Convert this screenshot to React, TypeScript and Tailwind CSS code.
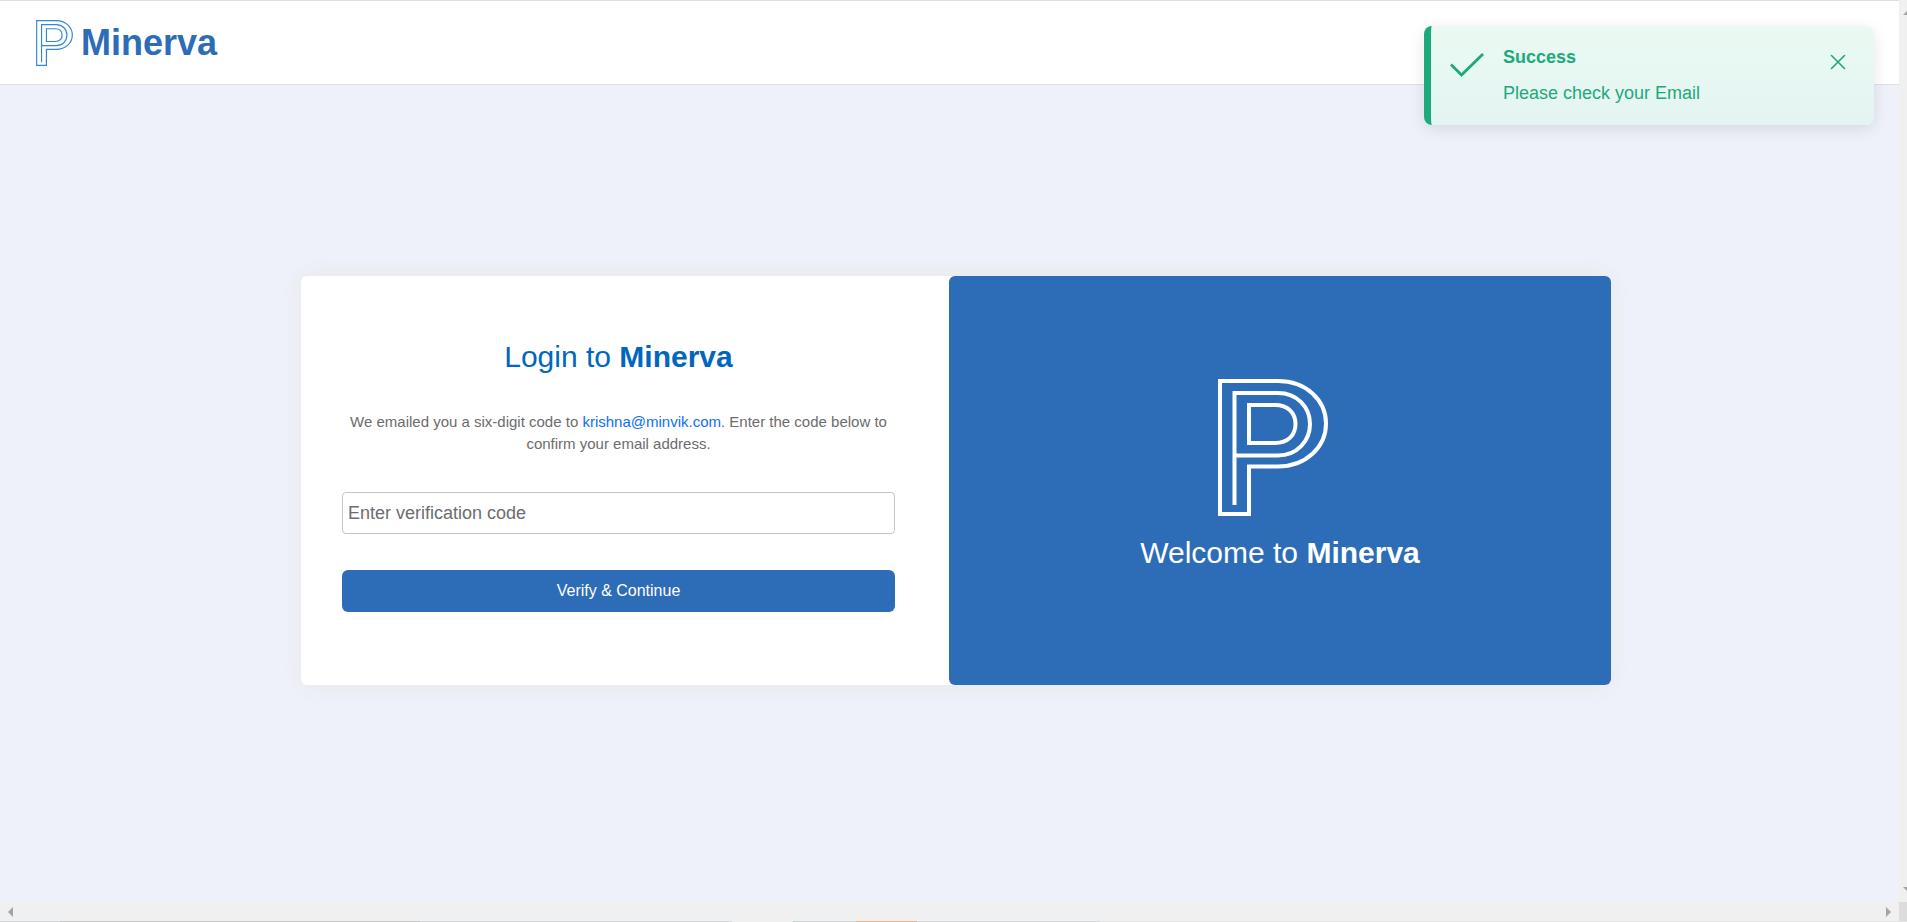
import { useState } from "react";

type LogoProps = {
  className: string;
  viewBox: string;
  strokeWidth: number;
};

function Logo({ className, viewBox, strokeWidth }: LogoProps) {
  return (
    <svg
      viewBox={viewBox}
      preserveAspectRatio="none"
      fill="none"
      stroke="currentColor"
      strokeWidth={strokeWidth}
      className={className}
      aria-hidden
    >
      <path d="M2 2H60C88 2 108 21 108 44.5S88 87.500 60 87.500H31V135H2Z" />
      <path d="M16.500 126V14H60C79 14 92 28 92 45S79 76.500 60 76.500H16.500" />
      <path d="M31 26H57C70 26 77.500 34 77.500 45S70 64 57 64H31Z" />
    </svg>
  );
}

function Header() {
  return (
    <header className="flex h-[85px] items-center gap-2 border-y border-[#dfdfe2] bg-white px-9">
      <Logo viewBox="0 0 110 137" className="h-[46px] w-[37px] text-[#3488d3]" strokeWidth={3.5} />
      <span className="text-[36px] leading-[44px] font-bold text-[#2d6cb7]">Minerva</span>
    </header>
  );
}

function Toast({ onClose }: { onClose: () => void }) {
  return (
    <div
      role="status"
      className="absolute top-[26px] right-[25px] flex w-[450px] items-start rounded-lg border-l-[7px] border-[#1ea97c] bg-linear-to-b from-[#eafaf2] to-[#e4f4f2] pt-[19px] pr-7 pb-5 pl-[19px] text-[#1ea97c] shadow-[0_4px_16px_rgba(0,0,0,0.1)]"
    >
      <svg
        viewBox="0 0 34 24"
        fill="none"
        stroke="currentColor"
        strokeWidth="2.8"
        className="mt-2 h-6 w-[34px] shrink-0"
        aria-hidden
      >
        <path d="M1 11.500L11.500 22L33 1" />
      </svg>
      <div className="ml-[19px] flex-1 text-lg leading-6">
        <p className="font-bold">Success</p>
        <p className="mt-3">Please check your Email</p>
      </div>
      <button type="button" aria-label="Close" onClick={onClose} className="mt-[9px] cursor-pointer">
        <svg
          viewBox="0 0 16 16"
          fill="none"
          stroke="currentColor"
          strokeWidth="1.6"
          strokeLinecap="round"
          className="size-4"
        >
          <path d="M1.500 1.500L14.500 14.500M14.500 1.500L1.500 14.500" />
        </svg>
      </button>
    </div>
  );
}

function VerifyForm() {
  return (
    <form
      className="flex-1 pt-[59px] pr-[54px] pb-[73px] pl-[41px] text-center"
      onSubmit={(e) => e.preventDefault()}
    >
      <h1 className="text-[30px] leading-[44px] text-[#0067bd]">
        Login to <strong>Minerva</strong>
      </h1>
      <p className="mt-8 text-[15px] leading-[22px] text-[#6c6c6c]">
        We emailed you a six-digit code to{" "}
        <a href="mailto:krishna@minvik.com" className="text-[#0d6efd]">
          krishna@minvik.com
        </a>
        . Enter the code below to confirm your email address.
      </p>
      <input
        type="text"
        aria-label="Verification code"
        placeholder="Enter verification code"
        className="mt-[37px] block h-[42px] w-full rounded border border-[#c4c4c4] px-[5px] text-lg placeholder:text-[#6c6c72]"
      />
      <button
        type="submit"
        className="mt-9 block h-[42px] w-full cursor-pointer rounded-md bg-[#2d6cb7] text-base text-white"
      >
        Verify &amp; Continue
      </button>
    </form>
  );
}

function Welcome() {
  return (
    <section className="flex w-[662px] flex-col items-center rounded-md bg-[#2d6cb7] pt-[103px] text-white">
      <Logo viewBox="0 0 124 137" className="h-[137px] w-[124px]" strokeWidth={4} />
      <h2 className="mt-[15px] text-[30px] leading-[44px]">
        Welcome to <strong>Minerva</strong>
      </h2>
    </section>
  );
}

function VerticalScrollbar() {
  return (
    <div className="flex flex-col items-end justify-between overflow-hidden bg-[#f0f0f0] py-[10px] text-[#a3a3a3]">
      <svg viewBox="0 0 4 5" fill="currentColor" className="h-[5px] w-1">
        <path d="M0 5L4 1V5Z" />
      </svg>
      <svg viewBox="0 0 4 5" fill="currentColor" className="h-[5px] w-1">
        <path d="M0 0H4V4Z" />
      </svg>
    </div>
  );
}

function HorizontalScrollbar() {
  return (
    <div className="flex items-center justify-between bg-[#f0f0f0] px-2 text-[#a3a3a3]">
      <svg viewBox="0 0 5 10" fill="currentColor" className="h-[10px] w-[5px]">
        <path d="M5 0V10L0 5Z" />
      </svg>
      <svg viewBox="0 0 5 10" fill="currentColor" className="h-[10px] w-[5px]">
        <path d="M0 0V10L5 5Z" />
      </svg>
    </div>
  );
}

export default function App() {
  const [showToast, setShowToast] = useState(true);

  return (
    <div className="grid min-h-screen grid-cols-[1fr_8px] grid-rows-[1fr_19px_1px] font-['Liberation_Sans',Arial,sans-serif]">
      <div className="relative flex flex-col bg-[#eef1fa]">
        <Header />
        <main className="flex flex-1 items-center justify-center pb-[26px] pl-[13px]">
          <div className="flex w-full max-w-[1310px] rounded-md bg-white shadow-[0_0_20px_rgba(220,220,200,0.4)]">
            <VerifyForm />
            <Welcome />
          </div>
        </main>
        {showToast && <Toast onClose={() => setShowToast(false)} />}
      </div>
      <VerticalScrollbar />
      <HorizontalScrollbar />
      <div className="bg-[#dcdcdc]" />
      {/* top edge of the taskbar */}
      <div className="col-span-2 flex bg-[#e4e4e4]">
        <div className="w-[60px] bg-[#d0dce1]" />
        <div className="w-[360px] bg-[#c8c8c8]" />
        <div className="w-[312px] bg-[#d0dce1]" />
        <div className="w-[61px] bg-[#f0f0f0]" />
        <div className="w-[63px] bg-[#ccd8dc]" />
        <div className="w-[61px] bg-[#f0ae7c]" />
        <div className="w-[183px] bg-[#d0dadc]" />
      </div>
    </div>
  );
}
